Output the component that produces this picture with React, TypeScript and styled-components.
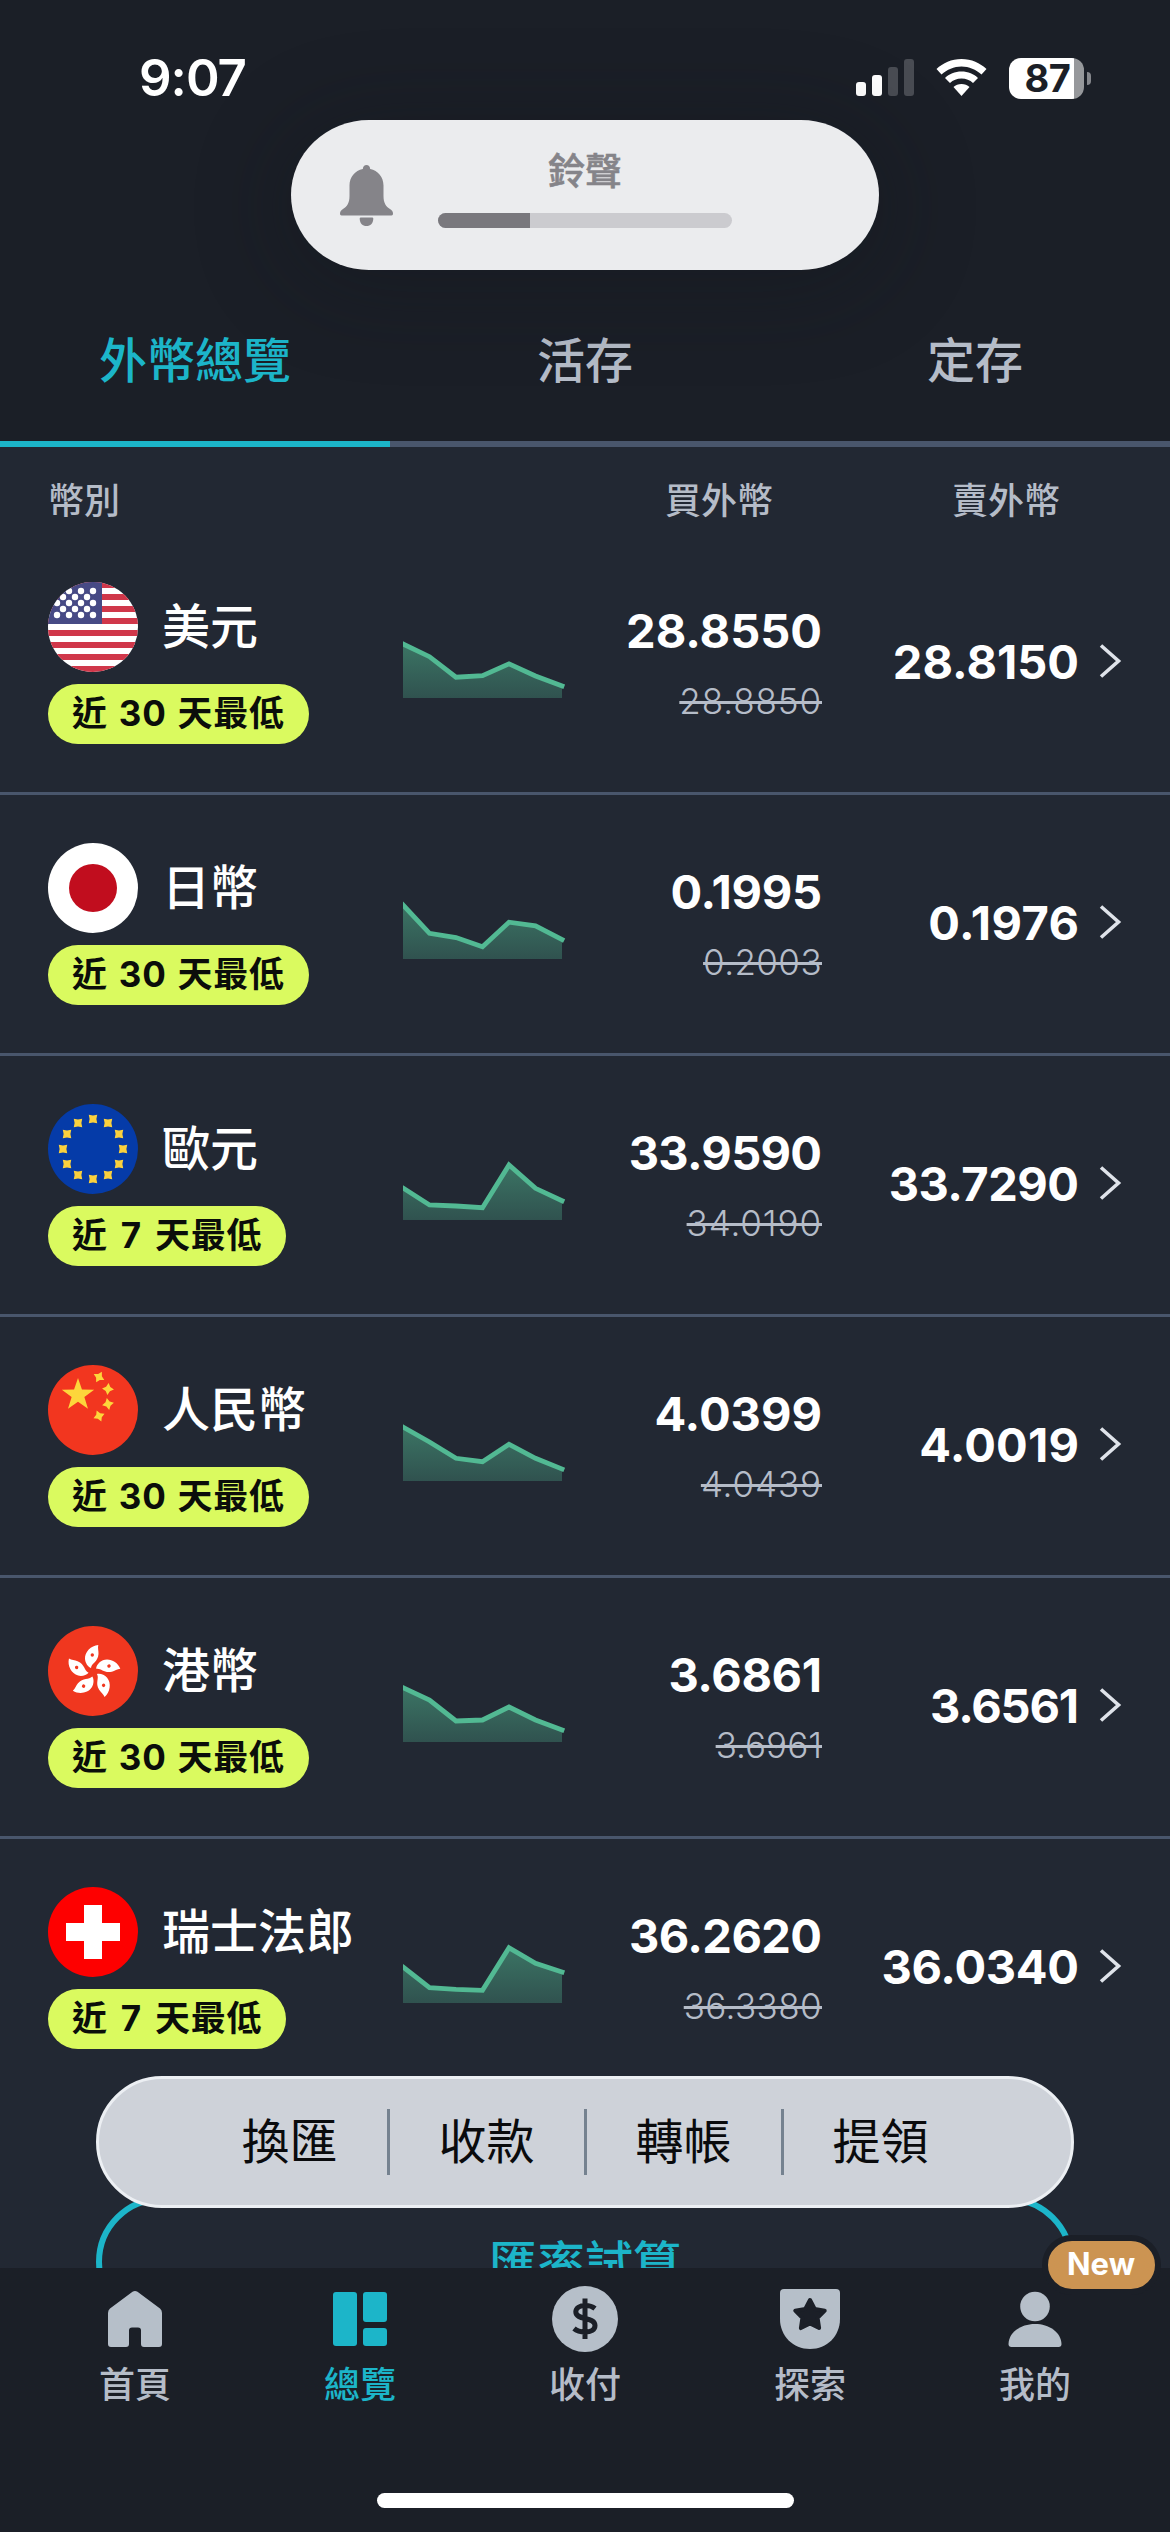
import React from 'react';
import styled, { createGlobalStyle } from 'styled-components';

const CJK = '"Noto Sans CJK TC", sans-serif';

const colors = {
  bar: '#1b1f27',
  page: '#222833',
  line: '#49566c',
  teal: '#1cb5c9',
  muted: '#b5bcc8',
  icon: '#b6bfc9',
  badge: '#dafa5f',
};

const Global = createGlobalStyle`
  * { box-sizing: border-box; }
  body { margin: 0; background: ${colors.page}; }
`;

const Screen = styled.div`
  width: 1170px;
  height: 2532px;
  position: relative;
  overflow: hidden;
  display: flex;
  flex-direction: column;
  background: ${colors.page};
  color: #fff;
  font-family: Inter, ${CJK};
`;

const StatusBar = styled.header`
  height: 276px;
  flex: none;
  padding: 48px 79px 0 139px;
  display: flex;
  justify-content: space-between;
  align-items: flex-start;
  background: ${colors.bar};
`;

const Clock = styled.div`
  font: 600 51px/60px Inter, sans-serif;
  letter-spacing: -1px;
`;

const StatusIcons = styled.div`
  height: 60px;
  display: flex;
  align-items: center;
  gap: 22px;
`;

const Battery = styled.div`
  display: flex;
  align-items: center;
  gap: 3px;
`;

const BatteryBody = styled.div`
  width: 75px;
  height: 41px;
  border-radius: 12px;
  display: flex;
  align-items: center;
  justify-content: center;
  background: linear-gradient(90deg, #fff 65px, #96989b 65px);
  color: ${colors.bar};
  font: 700 38px/41px Inter, sans-serif;
  letter-spacing: -0.5px;
  padding-left: 2px;
`;

const BatteryNub = styled.div`
  width: 4px;
  height: 13px;
  border-radius: 0 4px 4px 0;
  background: #85878c;
`;

const Ringer = styled.div`
  position: absolute;
  left: 291px;
  top: 120px;
  width: 588px;
  height: 150px;
  border-radius: 78px / 75px;
  padding: 0 49px;
  display: flex;
  align-items: center;
  gap: 45px;
  background: #ebecee;
  box-shadow: 0 12px 90px 10px rgba(15, 20, 28, 0.3);
`;

const RingerBody = styled.div`
  width: 294px;
  margin-bottom: 13px;
  display: flex;
  flex-direction: column;
  align-items: center;
  gap: 24px;
`;

const RingerLabel = styled.div`
  font: 500 37px/40px ${CJK};
  -webkit-text-stroke: 0.6px #858489;
  color: #858489;
`;

const Track = styled.div`
  width: 294px;
  height: 15px;
  border-radius: 8px;
  background: #cbcbcf;
  overflow: hidden;
`;

const Level = styled.div`
  width: 31.4%;
  height: 100%;
  background: #79787d;
`;

const Tabs = styled.nav`
  height: 171px;
  flex: none;
  display: grid;
  grid-template-columns: repeat(3, 1fr);
  background: ${colors.bar};
`;

const Tab = styled.div<{ $active?: boolean }>`
  padding-top: 45px;
  text-align: center;
  font: 500 48px/72px ${CJK};
  color: ${p => (p.$active ? colors.teal : colors.muted)};
  border-bottom: 6px solid ${p => (p.$active ? colors.teal : colors.line)};
`;

const HeadRow = styled.div`
  height: 87px;
  flex: none;
  padding: 15px 48px 0;
  display: grid;
  grid-template-columns: 355px 370px 1fr;
  align-items: center;
  font: 500 36px/54px ${CJK};
  color: ${colors.muted};
`;

const HeadCell = styled.span<{ $align?: 'left' | 'right'; $inset?: number }>`
  text-align: ${p => p.$align ?? 'left'};
  padding-left: ${p => p.$inset ?? 0}px;
`;

const Row = styled.div<{ $last?: boolean }>`
  height: 261px;
  flex: none;
  padding: 48px 48px 48px;
  display: grid;
  grid-template-columns: 355px 163px 256px 257px 1fr;
  border-bottom: 3px solid ${p => (p.$last ? 'transparent' : colors.line)};
`;

const Currency = styled.div`
  display: flex;
  flex-direction: column;
  align-items: flex-start;
  gap: 12px;
`;

const NameLine = styled.div`
  display: flex;
  align-items: center;
  gap: 24px;
  height: 90px;
`;

const Name = styled.span`
  font: 500 48px/72px ${CJK};
  margin-top: -9px;
  white-space: nowrap;
`;

const LowBadge = styled.span<{ $gap: number }>`
  height: 60px;
  padding: 0 24px;
  border-radius: 30px;
  background: ${colors.badge};
  color: #0b0e0a;
  font: 700 35px/58px Inter, ${CJK};
  letter-spacing: 0.75px;
  word-spacing: ${p => p.$gap}px;
  white-space: pre;
`;

const ChartCell = styled.div`
  padding-top: 56px;
`;

const BuyCell = styled.div`
  display: flex;
  flex-direction: column;
  align-items: flex-end;
  padding-top: 20px;
`;

const Price = styled.span<{ $track: number }>`
  font: 700 47px/58px Inter, sans-serif;
  letter-spacing: ${p => p.$track}px;
  margin-right: ${p => -p.$track}px;
`;

const OldPrice = styled.span<{ $track: number }>`
  margin-top: 19px;
  font: 300 35px/44px Inter, sans-serif;
  letter-spacing: ${p => p.$track}px;
  color: ${colors.muted};
  text-decoration: line-through;
  text-decoration-thickness: 3px;
`;

const SellCell = styled.div`
  display: flex;
  justify-content: flex-end;
  align-items: flex-start;
  padding-top: 51px;
`;

const ArrowCell = styled.div`
  display: flex;
  justify-content: flex-end;
  padding-top: 61px;
`;

const TrialButton = styled.div`
  width: 978px;
  height: 132px;
  flex: none;
  margin: 96px auto 0;
  border: 6px solid ${colors.teal};
  border-radius: 66px;
  text-align: center;
  font: 500 48px/116px ${CJK};
  color: ${colors.teal};
`;

const Actions = styled.div`
  position: absolute;
  left: 96px;
  top: 2076px;
  width: 978px;
  height: 132px;
  border: 3px solid #eceff3;
  border-radius: 66px;
  display: flex;
  align-items: center;
  justify-content: center;
  background: #ced2d9;
  color: #0a0b0d;
`;

const Action = styled.span`
  width: 194px;
  text-align: center;
  font: 400 48px/72px ${CJK};
  margin-top: -9px;
`;

const Divider = styled.span`
  width: 3px;
  height: 66px;
  background: #758290;
`;

const Dock = styled.footer`
  position: absolute;
  left: 0;
  bottom: 0;
  width: 1170px;
  height: 264px;
  padding: 15px 22px 24px;
  display: flex;
  flex-direction: column;
  justify-content: space-between;
  align-items: center;
  background: ${colors.bar};
`;

const DockItems = styled.div`
  display: grid;
  grid-template-columns: repeat(5, 225px);
`;

const DockItem = styled.div<{ $active?: boolean }>`
  position: relative;
  display: flex;
  flex-direction: column;
  align-items: center;
  color: ${p => (p.$active ? colors.teal : colors.muted)};
  font: 500 36px/54px ${CJK};
  svg {
    width: 72px;
    height: 72px;
    display: block;
    color: ${p => (p.$active ? colors.teal : colors.icon)};
  }
`;

const NewBadge = styled.span`
  position: absolute;
  left: 119px;
  top: -48px;
  width: 119px;
  height: 60px;
  border: 6px solid ${colors.bar};
  border-radius: 30px;
  background: #cc9452;
  color: #fff;
  text-align: center;
  font: 700 31px/46px Inter, sans-serif;
`;

const HomeIndicator = styled.div`
  width: 417px;
  height: 15px;
  border-radius: 8px;
  background: #fff;
`;

const star = (cx: number, cy: number, r: number, inner: number, n = 5, rot = 0) =>
  Array.from({ length: n * 2 }, (_, i) => {
    const a = rot - Math.PI / 2 + (i * Math.PI) / n;
    const q = i % 2 ? inner : r;
    return `${(cx + q * Math.cos(a)).toFixed(2)},${(cy + q * Math.sin(a)).toFixed(2)}`;
  }).join(' ');

const FlagBox = ({ id, children }: { id: string; children: React.ReactNode }) => (
  <svg width="90" height="90" viewBox="0 0 90 90">
    <clipPath id={id}><circle cx="45" cy="45" r="45" /></clipPath>
    <g clipPath={`url(#${id})`}>{children}</g>
  </svg>
);

const starRows: { y: number; xs: number[] }[] = [
  { y: 9, xs: [21, 33, 45] },
  { y: 15, xs: [15, 27, 39] },
  { y: 21, xs: [9, 21, 33, 45] },
  { y: 27, xs: [15, 27, 39] },
  { y: 33, xs: [9, 21, 33, 45] },
];

const flags: Record<string, React.ReactNode> = {
  us: (
    <FlagBox id="us">
      <rect width="90" height="90" fill="#fff" />
      {[0, 12, 24, 36, 48, 60, 72, 84].map(y => <rect key={y} y={y} width="90" height="6" fill="#d0374a" />)}
      <rect width="54" height="42" fill="#474a85" />
      {starRows.map(({ y, xs }) => xs.map(x => <circle key={`${x}-${y}`} cx={x} cy={y} r="3.2" fill="#fff" />))}
    </FlagBox>
  ),
  jp: (
    <FlagBox id="jp">
      <rect width="90" height="90" fill="#fff" />
      <circle cx="45" cy="45" r="24" fill="#c10d1e" />
    </FlagBox>
  ),
  eu: (
    <FlagBox id="eu">
      <rect width="90" height="90" fill="#053ba8" />
      {Array.from({ length: 12 }, (_, i) => {
        const a = (i * Math.PI) / 6;
        return (
          <polygon
            key={i}
            points={star(45 + 30 * Math.sin(a), 45 - 30 * Math.cos(a), 6, 3.4, 4, Math.PI / 4)}
            fill="#fbd13d"
          />
        );
      })}
    </FlagBox>
  ),
  cn: (
    <FlagBox id="cn">
      <rect width="90" height="90" fill="#f2361f" />
      <polygon points={star(30, 30, 17, 6.7)} fill="#fdd63b" />
      {[[51, 12, 0.5], [60, 24, 0.1], [60, 39, -0.2], [51, 51, -0.4]].map(([x, y, r]) => (
        <polygon key={y} points={star(x, y, 6, 3, 4, r)} fill="#fdd63b" />
      ))}
    </FlagBox>
  ),
  hk: (
    <FlagBox id="hk">
      <rect width="90" height="90" fill="#f0371f" />
      {[0, 72, 144, 216, 288].map(r => (
        <g key={r} transform={`rotate(${r} 45 46)`}>
          <path
            d="M50.3 19C43 19.5 36.500 26 37 33C37.300 37 40 41 43 42C43.500 37 50 36 50.500 28C50.700 25 49.500 22 50.300 19Z"
            fill="#fff"
          />
          <circle cx="44.300" cy="29" r="1.700" fill="#f0371f" />
        </g>
      ))}
    </FlagBox>
  ),
  ch: (
    <FlagBox id="ch">
      <rect width="90" height="90" fill="#fe0000" />
      <path d="M36 18h18v18h18v18H54v18H36V54H18V36h18z" fill="#fff" />
    </FlagBox>
  ),
};

type Rate = {
  flag: string;
  name: string;
  days: number;
  buy: string;
  old: string;
  sell: string;
  tracks: [number, number, number];
  trend: number[];
};

const rates: Rate[] = [
  { flag: 'us', name: '美元', days: 30, buy: '28.8550', old: '28.8850', sell: '28.8150', tracks: [0, 0.9, 0], trend: [54, 41.3, 20.8, 22.3, 34.2, 22, 12] },
  { flag: 'jp', name: '日幣', days: 30, buy: '0.1995', old: '0.2003', sell: '0.1976', tracks: [-0.3, 0.4, 0.4], trend: [54, 25.7, 21.4, 12.3, 36.8, 33.2, 19.4] },
  { flag: 'eu', name: '歐元', days: 7, buy: '33.9590', old: '34.0190', sell: '33.7290', tracks: [-0.7, 0.9, -0.5], trend: [32, 15, 14, 12.3, 55, 31.7, 19.3] },
  { flag: 'cn', name: '人民幣', days: 30, buy: '4.0399', old: '4.0439', sell: '4.0019', tracks: [0, 0.9, 0.2], trend: [54, 39, 22.7, 19.3, 36.7, 22.7, 12] },
  { flag: 'hk', name: '港幣', days: 30, buy: '3.6861', old: '3.6961', sell: '3.6561', tracks: [-0.4, 0, -1.2], trend: [54.3, 42, 21, 22, 35, 22, 12] },
  { flag: 'ch', name: '瑞士法郎', days: 7, buy: '36.2620', old: '36.3380', sell: '36.0340', tracks: [-0.6, 0.4, -0.3], trend: [36, 15.3, 13.7, 12.7, 55.3, 39.7, 31] },
];

const Sparkline = ({ id, trend }: { id: string; trend: number[] }) => {
  const pts = trend.map((v, i) => `${(i * 26.5).toFixed(1)},${60 - v}`);
  return (
    <svg width="163" height="62" viewBox="0 0 163 62">
      <defs>
        <linearGradient id={`${id}-fill`} x1="0" y1="0" x2="0" y2="1">
          <stop offset="0" stopColor="#3b7464" />
          <stop offset="1" stopColor="#30524f" />
        </linearGradient>
      </defs>
      <polygon points={`0,60 ${pts.join(' ')} 159,60`} fill={`url(#${id}-fill)`} />
      <polyline points={pts.join(' ')} fill="none" stroke="#52b993" strokeWidth="4.800" strokeLinecap="square" />
    </svg>
  );
};

const RateRow = ({ rate, last }: { rate: Rate; last: boolean }) => (
  <Row $last={last}>
    <Currency>
      <NameLine>
        {flags[rate.flag]}
        <Name>{rate.name}</Name>
      </NameLine>
      <LowBadge $gap={rate.days > 9 ? 2 : 4}>{`近 ${rate.days} 天最低`}</LowBadge>
    </Currency>
    <ChartCell><Sparkline id={rate.flag} trend={rate.trend} /></ChartCell>
    <BuyCell>
      <Price $track={rate.tracks[0]}>{rate.buy}</Price>
      <OldPrice $track={rate.tracks[1]}>{rate.old}</OldPrice>
    </BuyCell>
    <SellCell><Price $track={rate.tracks[2]}>{rate.sell}</Price></SellCell>
    <ArrowCell>
      <svg width="24" height="36" viewBox="0 0 24 36">
        <path d="M3 2.500L20.500 18L3 33.500" fill="none" stroke="#dfe3ea" strokeWidth="3.600" />
      </svg>
    </ArrowCell>
  </Row>
);

export default function App() {
  return (
    <Screen>
      <Global />
      <StatusBar>
        <Clock>9:07</Clock>
        <StatusIcons>
          <svg width="58" height="38" viewBox="0 0 58 38">
            <rect x="0" y="23" width="10" height="14" rx="3" fill="#fff" />
            <rect x="16" y="16" width="10" height="21" rx="3" fill="#fff" />
            <rect x="32" y="8" width="10" height="29" rx="3" fill="#494c53" />
            <rect x="48" y="0" width="10" height="37" rx="3" fill="#494c53" />
          </svg>
          <svg width="51" height="38" viewBox="0 0 51 38">
            <path d="M25.500 0C35.500 0 44 4 50.500 10L45.500 15.500C40 10.500 33 7.500 25.500 7.500S11 10.500 5.500 15.500L0.500 10C7 4 15.500 0 25.500 0Z" fill="#fff" />
            <path d="M25.500 12.500C32 12.500 38 15 42 19L37 24C34 21 30 19.500 25.500 19.500S17 21 14 24L9 19C13 15 19 12.500 25.500 12.500Z" fill="#fff" />
            <path d="M25.500 25C28.500 25 31.500 26 33.500 28L25.500 37L17.500 28C19.500 26 22.500 25 25.500 25Z" fill="#fff" />
          </svg>
          <Battery>
            <BatteryBody>87</BatteryBody>
            <BatteryNub />
          </Battery>
        </StatusIcons>
      </StatusBar>
      <Tabs>
        <Tab $active>外幣總覽</Tab>
        <Tab>活存</Tab>
        <Tab>定存</Tab>
      </Tabs>
      <HeadRow>
        <HeadCell>幣別</HeadCell>
        <HeadCell $align="right">買外幣</HeadCell>
        <HeadCell $inset={179}>賣外幣</HeadCell>
      </HeadRow>
      {rates.map((r, i) => <RateRow key={r.flag} rate={r} last={i === rates.length - 1} />)}
      <TrialButton>匯率試算</TrialButton>
      <Ringer>
        <svg width="53" height="61" viewBox="0 0 53 61">
          <path d="M26.500 0C28.500 0 30 1.500 30.200 4C38 5.500 43.500 12 43.500 20.500V31C43.500 38 46 41.500 50 44C52 45.500 53 46.500 53 48.500C53 49.800 52.500 50.500 51.500 50.500H1.500C0.500 50.500 0 49.800 0 48.500C0 46.500 1 45.500 3 44C7 41.500 9.500 38 9.500 31V20.500C9.500 12 15 5.500 22.800 4C23 1.500 24.500 0 26.500 0Z" fill="#858489" />
          <path d="M20.500 52.500H32.500Q33.500 52.500 33.300 54C33 58.500 30.500 61 26.500 61S20 58.500 19.700 54Q19.500 52.500 20.500 52.500Z" fill="#858489" />
        </svg>
        <RingerBody>
          <RingerLabel>鈴聲</RingerLabel>
          <Track><Level /></Track>
        </RingerBody>
      </Ringer>
      <Actions>
        <Action>換匯</Action>
        <Divider />
        <Action>收款</Action>
        <Divider />
        <Action>轉帳</Action>
        <Divider />
        <Action>提領</Action>
      </Actions>
      <Dock>
        <DockItems>
          <DockItem>
            <svg viewBox="0 0 72 72">
              <path d="M33.500 8.800Q36 7 38.500 8.800L61 25.500Q63 27 63 30V61Q63 64 60 64H45Q42 64 42 61V47.500Q42 44.500 39 44.500H33Q30 44.500 30 47.500V61Q30 64 27 64H12Q9 64 9 61V30Q9 27 11 25.500Z" fill="currentColor" />
            </svg>
            首頁
          </DockItem>
          <DockItem $active>
            <svg viewBox="0 0 72 72" fill="currentColor">
              <rect x="9" y="9" width="24" height="54" rx="3" />
              <rect x="39" y="9" width="24" height="30" rx="3" />
              <rect x="39" y="45" width="24" height="18" rx="3" />
            </svg>
            總覽
          </DockItem>
          <DockItem>
            <svg viewBox="0 0 72 72">
              <circle cx="36" cy="36" r="33" fill="currentColor" />
              <path d="M46 25.500C43.500 23.500 40 22.500 36.500 22.500C30.500 22.500 26.800 25 26.800 28.800C26.800 38 46 33 46 42.500C46 46.800 42 49 36 49C31.500 49 27.500 47.700 25 45.500M36 15.500V56" fill="none" stroke={colors.bar} strokeWidth="5" />
            </svg>
            收付
          </DockItem>
          <DockItem>
            <svg viewBox="0 0 72 72">
              <path d="M6 10Q6 6 10 6H62Q66 6 66 10V36C66 53 53 66 36 66S6 53 6 36Z" fill="currentColor" />
              <polygon points={star(36, 32.500, 15.500, 8)} fill={colors.bar} stroke={colors.bar} strokeWidth="4" strokeLinejoin="round" />
            </svg>
            探索
          </DockItem>
          <DockItem>
            <svg viewBox="0 0 72 72" fill="currentColor">
              <circle cx="36" cy="23.500" r="14.800" />
              <path d="M9.500 61C10 49 22 41 36 41S62 49 62.500 61Q62.500 64 59.500 64H12.500Q9.500 64 9.500 61Z" />
            </svg>
            我的
            <NewBadge>New</NewBadge>
          </DockItem>
        </DockItems>
        <HomeIndicator />
      </Dock>
    </Screen>
  );
}
